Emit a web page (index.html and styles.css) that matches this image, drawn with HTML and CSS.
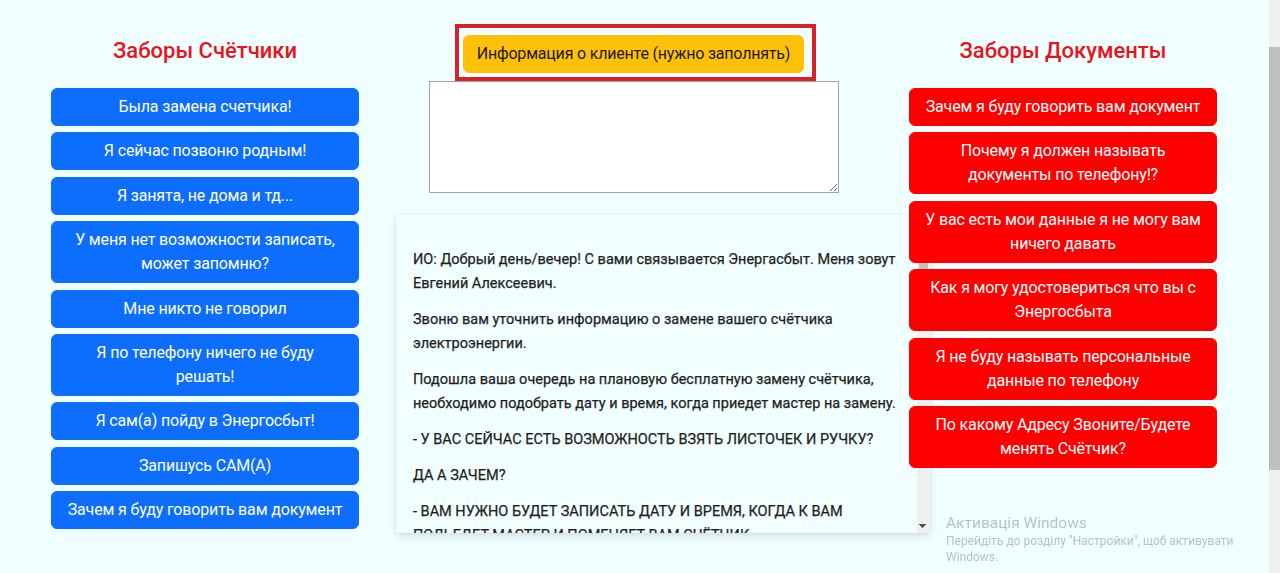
FILE: index.html
```html
<!DOCTYPE html>
<html lang="ru">
<head>
<meta charset="utf-8">
<title>Заборы</title>
<link rel="stylesheet" href="styles.css">
</head>
<body>
<div class="viewport">
  <main class="page">
    <section class="col col-side">
      <h3 class="col-title">Заборы Счётчики</h3>
      <div class="btn-list">
        <button class="btn btn-blue">Была замена счетчика!</button>
        <button class="btn btn-blue">Я сейчас позвоню родным!</button>
        <button class="btn btn-blue">Я занята, не дома и тд...</button>
        <button class="btn btn-blue">У меня нет возможности записать,<br>может запомню?</button>
        <button class="btn btn-blue">Мне никто не говорил</button>
        <button class="btn btn-blue">Я по телефону ничего не буду<br>решать!</button>
        <button class="btn btn-blue">Я сам(а) пойду в Энергосбыт!</button>
        <button class="btn btn-blue">Запишусь САМ(А)</button>
        <button class="btn btn-blue">Зачем я буду говорить вам документ</button>
      </div>
    </section>

    <section class="col col-center">
      <div class="client-box">
        <button class="btn btn-yellow">Информация о клиенте (нужно заполнять)</button>
      </div>
      <textarea class="client-notes"></textarea>
      <div class="script-box">
        <div class="script-content">
          <p>ИО: Добрый день/вечер! С вами связывается Энергасбыт. Меня зовут Евгений Алексеевич.</p>
          <p>Звоню вам уточнить информацию о замене вашего счётчика электроэнергии.</p>
          <p>Подошла ваша очередь на плановую бесплатную замену счётчика, необходимо подобрать дату и время, когда приедет мастер на замену.</p>
          <p>- У ВАС СЕЙЧАС ЕСТЬ ВОЗМОЖНОСТЬ ВЗЯТЬ ЛИСТОЧЕК И РУЧКУ?</p>
          <p>ДА А ЗАЧЕМ?</p>
          <p>- ВАМ НУЖНО БУДЕТ ЗАПИСАТЬ ДАТУ И ВРЕМЯ, КОГДА К ВАМ ПОДЬЕДЕТ МАСТЕР И ПОМЕНЯЕТ ВАМ СЧЁТЧИК.</p>
          <p>- ПОДСКАЖИТЕ, ПОЖАЛУЙСТА, ВАШУ ФАМИЛИЮ, ИМЯ И ОТЧЕСТВО.</p>
          <p>- НА КАКУЮ ДАТУ И ВРЕМЯ ВАМ БУДЕТ УДОБНО?</p>
        </div>
        <div class="script-scrollbar">
          <span class="sb-arrow sb-arrow-up"></span>
          <span class="sb-thumb"></span>
          <span class="sb-track"></span>
          <span class="sb-arrow sb-arrow-down"></span>
        </div>
      </div>
    </section>

    <section class="col col-side col-right">
      <h3 class="col-title">Заборы Документы</h3>
      <div class="btn-list">
        <button class="btn btn-red">Зачем я буду говорить вам документ</button>
        <button class="btn btn-red">Почему я должен называть<br>документы по телефону!?</button>
        <button class="btn btn-red">У вас есть мои данные я не могу вам<br>ничего давать</button>
        <button class="btn btn-red">Как я могу удостовериться что вы с<br>Энергосбыта</button>
        <button class="btn btn-red">Я не буду называть персональные<br>данные по телефону</button>
        <button class="btn btn-red">По какому Адресу Звоните/Будете<br>менять Счётчик?</button>
      </div>
    </section>
  </main>
  <div class="page-scrollbar"><div class="page-scrollbar-thumb"></div></div>
</div>

<div class="watermark">
  <div class="watermark-title">Активація Windows</div>
  <div class="watermark-text">Перейдіть до розділу "Настройки", щоб активувати<br>Windows.</div>
</div>
</body>
</html>
```

FILE: styles.css
```css
html, body {
  margin: 0;
  height: 100%;
  overflow: hidden;
}

body {
  background: #f0ffff;
  font-family: Roboto, "Noto Sans", "Liberation Sans", sans-serif;
  color: #212529;
}

.viewport {
  display: flex;
  height: 573px;
}

.page {
  flex: 1;
  display: grid;
  grid-template-columns: 308px 550px 308px;
  padding-left: 51px;
  align-items: start;
}

.col-side {
  display: flex;
  flex-direction: column;
}

.col-title {
  margin: 37px 0 23px;
  font-size: 22px;
  line-height: 28px;
  font-weight: 500;
  color: #e8141b;
  text-align: center;
}

.btn-list {
  display: flex;
  flex-direction: column;
  gap: 6.4px;
}

.btn {
  display: block;
  width: 100%;
  box-sizing: border-box;
  font-family: inherit;
  font-size: 16px;
  line-height: 24px;
  letter-spacing: -0.15px;
  padding: 6px 12px;
  border: 1px solid transparent;
  border-radius: 6px;
  text-align: center;
  color: #fff;
  cursor: pointer;
}

.btn-blue {
  background: #0d6efd;
  border-color: #0d6efd;
}

.btn-red {
  background: #ff0000;
  border-color: #ff0000;
}

.btn-yellow {
  width: 341px;
  background: #ffc107;
  border-color: #ffc107;
  color: #1a1a1a;
  padding: 6px 4px;
  letter-spacing: -0.2px;
}

.col-center {
  display: flex;
  flex-direction: column;
  align-items: center;
  padding-top: 24px;
}

.client-box {
  border: 4px solid #d9212c;
  padding: 7px 8px 4px 4px;
  margin-left: 3px;
}

.client-notes {
  display: block;
  width: 410px;
  height: 112px;
  box-sizing: border-box;
  margin: 0;
  border: 1px solid #a3a3a3;
  background: #fff;
  font-family: inherit;
}

.script-box {
  align-self: flex-start;
  display: flex;
  margin: 22px 0 0 37px;
  width: 534px;
  height: 318px;
  background: #f2ffff;
  box-shadow: 0 3px 8px rgba(0, 0, 0, 0.12), 0 0 3px rgba(0, 0, 0, 0.05);
}

.script-content {
  flex: 1;
  overflow: hidden;
  padding: 33px 17px 0;
  font-size: 14.5px;
  line-height: 24px;
  color: #1e1e1e;
  -webkit-text-stroke: 0.25px currentColor;
}

.script-content p {
  margin: 0 0 12px;
}

.script-scrollbar {
  flex: none;
  width: 13px;
  display: flex;
  flex-direction: column;
  background: #f1efef;
}

.sb-arrow {
  flex: none;
  height: 14px;
  background-repeat: no-repeat;
  background-size: 4px 4px, 4px 4px;
  background-position: 2px 5px, 6px 5px;
}

.sb-arrow-up {
  background-image:
    linear-gradient(to top left, #505050 50%, transparent 50%),
    linear-gradient(to top right, #505050 50%, transparent 50%);
}

.sb-arrow-down {
  background-image:
    linear-gradient(to bottom left, #505050 50%, transparent 50%),
    linear-gradient(to bottom right, #505050 50%, transparent 50%);
}

.sb-thumb {
  flex: none;
  height: 100px;
  margin: 0 2px;
  background: #c1c1c1;
}

.sb-track {
  flex: 1;
}

.page-scrollbar {
  flex: none;
  width: 11px;
  background: #f0f0f0;
}

.page-scrollbar-thumb {
  margin-top: 47px;
  height: 423px;
  background: #c1c1c1;
  border-left: 1px solid #b5b5b5;
}

.watermark {
  position: fixed;
  left: 946px;
  top: 513px;
  color: #b8c2c2;
  pointer-events: none;
}

.watermark-title {
  font-size: 15.5px;
  line-height: 20px;
}

.watermark-text {
  font-size: 12px;
  line-height: 16px;
}
```
